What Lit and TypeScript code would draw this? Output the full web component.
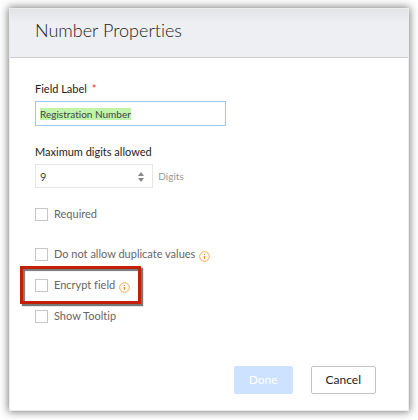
import { LitElement, html, css, svg, nothing } from "lit";
import { customElement, property, query } from "lit/decorators.js";

const infoIcon = html`<svg class="info" viewBox="0 0 11 11" role="img" aria-label="More information">
  ${svg`<circle cx="5.5" cy="5.5" r="4.8" fill="none" stroke="#f8a850" stroke-width="1" />
  <rect x="5" y="3" width="1" height="1" fill="#f08a24" />
  <path d="M4.4 5H6V8H5V5.8H4.4Z" fill="#f08a24" />`}
</svg>`;

@customElement("check-option")
class CheckOption extends LitElement {
  @property() label = "";
  @property({ type: Boolean }) info = false;

  static styles = css`
    :host {
      display: flex;
      align-items: center;
      height: 16px;
    }
    .option {
      display: flex;
      align-items: center;
      gap: 6px;
      line-height: 16px;
    }
    .box {
      appearance: none;
      box-sizing: border-box;
      width: 13px;
      height: 13px;
      margin: 1px 0 0;
      border: 1px solid #c6c6c6;
      background: #fff;
    }
    .box:checked {
      background: #8fbfec;
    }
    .info {
      width: 11px;
      height: 11px;
      margin: 5px 0 0 4px;
    }
  `;

  render() {
    return html`
      <label class="option"><input class="box" type="checkbox" />${this.label}</label>
      ${this.info ? infoIcon : nothing}
    `;
  }
}

@customElement("app-root")
class AppRoot extends LitElement {
  @query("#field-label") private fieldLabel!: HTMLInputElement;

  static styles = css`
    :host {
      display: block;
      box-sizing: border-box;
      min-height: 100vh;
      padding: 8px 9px;
      background: #fff;
      color: #666;
      font: 11px/16px Lato, "Liberation Sans", sans-serif;
      font-variant-ligatures: none;
    }
    .dialog {
      display: flex;
      flex-direction: column;
      box-sizing: border-box;
      min-height: calc(100vh - 17px);
      border: 1px solid #ececec;
      background: #fff;
      box-shadow: 0 0 8px 1px rgba(0, 0, 0, 0.5);
    }
    .header {
      box-sizing: border-box;
      height: 49px;
      padding: 7px 25px;
      border-bottom: 1px solid #cbcdd1;
      background: linear-gradient(#e2e3e5, #eeeff3 14px);
    }
    .title {
      margin: 0;
      color: #222;
      font-size: 18px;
      font-weight: 300;
      line-height: 28px;
    }
    .body {
      padding: 23px 25px 0;
    }
    .name {
      display: block;
      color: #222;
    }
    .required {
      margin-left: 2px;
      color: #e33;
    }
    .text,
    .number {
      box-sizing: border-box;
      margin: 0;
      padding: 0 4px;
      outline: none;
      background: #fff;
      color: #444;
      font: inherit;
    }
    .text {
      display: block;
      width: 55%;
      height: 25px;
      margin: 4px 0 18px;
      border: 1px solid #9ac9f5;
      font-size: 10px;
      line-height: 14px;
    }
    .text::selection {
      background: #c0f4ab;
      color: #444;
    }
    .amount {
      display: flex;
      align-items: center;
      gap: 5px;
      margin-top: 4px;
      color: #999;
      font-size: 10px;
    }
    .stepper {
      position: relative;
      width: 34%;
    }
    .number {
      display: block;
      width: 100%;
      height: 24px;
      border: 1px solid #e6e6e6;
      font-size: 11px;
      appearance: textfield;
    }
    .number::-webkit-inner-spin-button {
      appearance: none;
    }
    .arrows {
      position: absolute;
      top: 8px;
      right: 9px;
      width: 6px;
      height: 10px;
    }
    .options {
      display: grid;
      gap: 15px;
      margin-top: 18px;
    }
    .spaced {
      margin-bottom: 9px;
    }
    .marked {
      position: relative;
      width: max-content;
    }
    .marked::before {
      content: "";
      position: absolute;
      inset: -11px -11px -11px -15px;
      border: 3px solid #c31f00;
      box-shadow: 2px 2px 1px #777, inset 2px 2px 1px #777;
      pointer-events: none;
    }
    .actions {
      display: flex;
      justify-content: flex-end;
      gap: 18px;
      margin-top: auto;
      padding: 0 32px 16px;
    }
    .button {
      box-sizing: border-box;
      height: 28px;
      padding: 0 14px;
      border: 1px solid #c4c4c4;
      border-radius: 2px;
      background: #fff;
      color: #222;
      font: 12px/16px Lato, "Liberation Sans", sans-serif;
    }
    .primary {
      border-color: #cce2ff;
      background: #cce2ff;
      color: #fff;
    }
  `;

  firstUpdated() {
    this.fieldLabel.focus();
    this.fieldLabel.select();
  }

  render() {
    return html`
      <form class="dialog" @submit=${(e: Event) => e.preventDefault()}>
        <header class="header"><h1 class="title">Number Properties</h1></header>
        <div class="body">
          <label class="name" for="field-label">Field Label <span class="required">*</span></label>
          <input id="field-label" class="text" type="text" value="Registration Number" />
          <label class="name" for="max-digits">Maximum digits allowed</label>
          <div class="amount">
            <div class="stepper">
              <input id="max-digits" class="number" type="number" value="9" />
              <svg class="arrows" viewBox="0 0 6 10" aria-hidden="true">
                <path d="M0 4L3 0L6 4ZM0 6H6L3 10Z" fill="#888" />
              </svg>
            </div>
            <span>Digits</span>
          </div>
          <div class="options">
            <check-option class="spaced" label="Required"></check-option>
            <check-option label="Do not allow duplicate values" info></check-option>
            <check-option class="marked" label="Encrypt field" info></check-option>
            <check-option label="Show Tooltip"></check-option>
          </div>
        </div>
        <footer class="actions">
          <button class="button primary" type="submit">Done</button>
          <button class="button" type="button">Cancel</button>
        </footer>
      </form>
    `;
  }
}
